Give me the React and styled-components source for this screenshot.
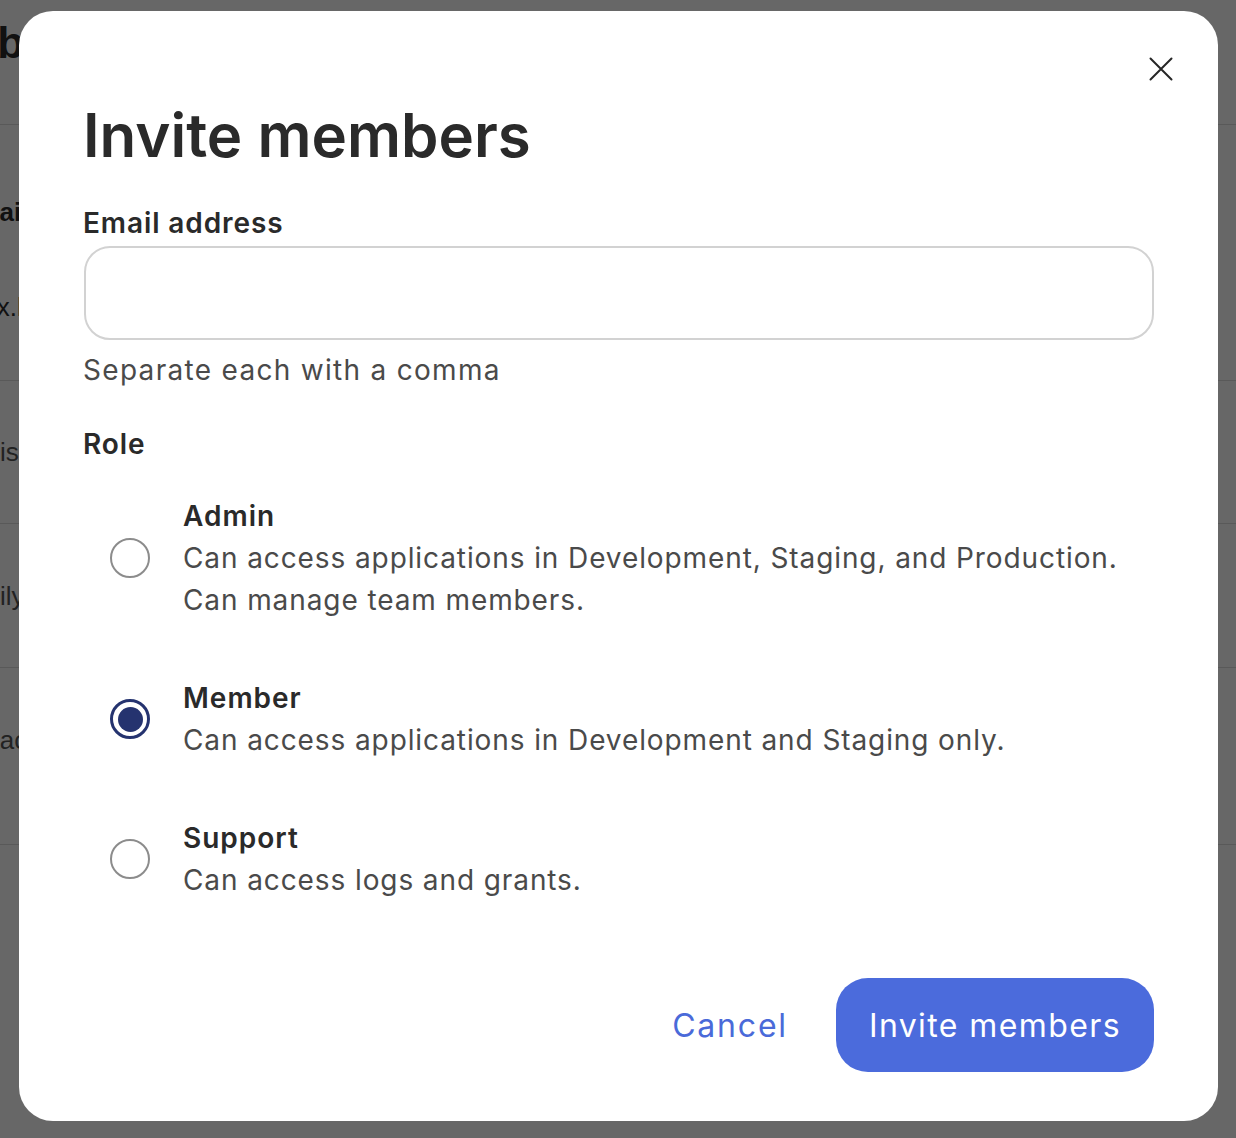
import React, { useState } from "react";
import styled, { createGlobalStyle } from "styled-components";

const roles = [
  {
    id: "admin",
    name: "Admin",
    lines: [
      "Can access applications in Development, Staging, and Production.",
      "Can manage team members.",
    ],
  },
  {
    id: "member",
    name: "Member",
    lines: ["Can access applications in Development and Staging only."],
  },
  {
    id: "support",
    name: "Support",
    lines: ["Can access logs and grants."],
  },
];

// faded page behind the dialog, only its left strip shows
const bgRows = [
  { h: 124, pad: 18, text: "Jobs", shift: -54, bold: true, size: 44, first: true },
  { h: 136, pad: 72, text: "Email", shift: -41, bold: true, size: 26 },
  { h: 120, pad: 32, text: "alex.kim", shift: -38, size: 26, dark: true, noLine: true },
  { h: 143, pad: 56, text: "Chris", shift: -42, size: 26 },
  { h: 144, pad: 57, text: "Emily", shift: -39, size: 26 },
  { h: 177, pad: 57, text: "Isaac", shift: -35, size: 26 },
  { h: 300, pad: 0, text: "", shift: 0, size: 26 },
];

function App() {
  const [role, setRole] = useState("member");

  return (
    <>
      <GlobalStyle />
      <Page>
        {bgRows.map((r, i) => (
          <BgRow key={i} $h={r.h} $pad={r.pad} $line={!r.first && !r.noLine}>
            <BgText
              $shift={r.shift}
              $bold={r.bold}
              $size={r.size}
              $dark={r.bold || r.dark}
            >
              {r.text}
            </BgText>
          </BgRow>
        ))}
      </Page>

      <Overlay>
        <Modal>
          <CloseButton aria-label="Close">
            <svg width="24" height="24" viewBox="0 0 24 24">
              <path
                d="M1.5 1.5 L22.5 22.5 M22.5 1.5 L1.5 22.5"
                stroke="#262626"
                strokeWidth="2"
                strokeLinecap="round"
              />
            </svg>
          </CloseButton>

          <Title>Invite members</Title>

          <Label>Email address</Label>
          <EmailInput type="text" />
          <Hint>Separate each with a comma</Hint>

          <Label $top={36}>Role</Label>
          <Options>
            {roles.map((r) => (
              <Option key={r.id} onClick={() => setRole(r.id)}>
                <Radio $checked={role === r.id} />
                <OptionText>
                  <OptionName>{r.name}</OptionName>
                  {r.lines.map((l) => (
                    <OptionDesc key={l}>{l}</OptionDesc>
                  ))}
                </OptionText>
              </Option>
            ))}
          </Options>

          <Footer>
            <CancelButton>Cancel</CancelButton>
            <PrimaryButton>Invite members</PrimaryButton>
          </Footer>
        </Modal>
      </Overlay>
    </>
  );
}

const GlobalStyle = createGlobalStyle`
  html, body {
    margin: 0;
    padding: 0;
    background: #ffffff;
    overflow: hidden;
  }
  * {
    box-sizing: border-box;
  }
`;

const Page = styled.div`
  width: 1236px;
  height: 1138px;
  display: flex;
  flex-direction: column;
  font-family: "Liberation Sans", Arial, sans-serif;
  -webkit-font-smoothing: antialiased;
`;

const BgRow = styled.div`
  height: ${(p) => p.$h}px;
  flex-shrink: 0;
  padding-top: ${(p) => p.$pad}px;
  border-top: ${(p) => (p.$line ? "1px solid #dddddd" : "none")};
  display: flex;
`;

const BgText = styled.span`
  margin-left: ${(p) => p.$shift}px;
  font-size: ${(p) => p.$size}px;
  line-height: ${(p) => (p.$size > 30 ? 50 : 30)}px;
  font-weight: ${(p) => (p.$bold ? 700 : 400)};
  color: ${(p) => (p.$dark ? "#2a2a2a" : "#555555")};
  white-space: nowrap;
`;

const Overlay = styled.div`
  position: fixed;
  inset: 0;
  background: rgba(0, 0, 0, 0.595);
  padding: 11px 18px 0 19px;
  display: flex;
  align-items: flex-start;
`;

const Modal = styled.div`
  position: relative;
  width: 1199px;
  height: 1110px;
  background: #ffffff;
  border-radius: 34px;
  padding: 88px 64px 49px 64px;
  display: flex;
  flex-direction: column;
  font-family: Inter, "Noto Sans", sans-serif;
  color: #2b2b2b;
`;

const CloseButton = styled.button`
  position: absolute;
  top: 45px;
  right: 44px;
  width: 26px;
  height: 26px;
  padding: 1px;
  border: none;
  background: none;
  cursor: pointer;
  display: flex;
`;

const Title = styled.h1`
  margin: 0;
  font-size: 60px;
  line-height: 72px;
  font-weight: 600;
  letter-spacing: 0px;
  color: #2a2a2a;
`;

const Label = styled.div`
  margin-top: ${(p) => p.$top || 34}px;
  font-size: 28px;
  line-height: 36px;
  font-weight: 600;
  letter-spacing: 0.9px;
  color: #2a2a2a;
`;

const EmailInput = styled.input`
  margin-top: 5px;
  margin-left: 1px;
  width: calc(100% - 1px);
  height: 94px;
  border: 2px solid #d2d2d2;
  border-radius: 26px;
  padding: 0 24px;
  font-family: inherit;
  font-size: 28px;
  outline: none;
`;

const Hint = styled.div`
  margin-top: 10px;
  font-size: 28px;
  line-height: 40px;
  color: #4a4a4a;
  letter-spacing: 1.3px;
`;

const Options = styled.div`
  margin-top: 33px;
  display: flex;
  flex-direction: column;
  gap: 56px;
`;

const Option = styled.div`
  display: flex;
  align-items: center;
  gap: 33px;
  padding-left: 27px;
  cursor: pointer;
`;

const Radio = styled.span`
  flex-shrink: 0;
  width: 40px;
  height: 40px;
  border-radius: 50%;
  border: ${(p) => (p.$checked ? "3px solid #25336f" : "2px solid #8c8c8c")};
  display: flex;
  align-items: center;
  justify-content: center;
  &::after {
    content: "";
    display: ${(p) => (p.$checked ? "block" : "none")};
    width: 25px;
    height: 25px;
    border-radius: 50%;
    background: #25336f;
  }
`;

const OptionText = styled.div`
  display: flex;
  flex-direction: column;
  font-size: 28px;
  line-height: 42px;
`;

const OptionName = styled.div`
  font-weight: 600;
  letter-spacing: 1px;
  color: #2a2a2a;
`;

const OptionDesc = styled.div`
  color: #4a4a4a;
  letter-spacing: 0.9px;
`;

const Footer = styled.div`
  margin-top: auto;
  display: flex;
  justify-content: flex-end;
  align-items: center;
  gap: 48px;
`;

const CancelButton = styled.button`
  border: none;
  background: none;
  padding: 0;
  font-family: inherit;
  font-size: 32px;
  letter-spacing: 1.8px;
  color: #4a6ad9;
  cursor: pointer;
`;

const PrimaryButton = styled.button`
  height: 94px;
  padding: 0 33px;
  border: none;
  border-radius: 32px;
  background: #4b6bdc;
  color: #ffffff;
  font-family: inherit;
  font-size: 32px;
  letter-spacing: 1.4px;
  cursor: pointer;
`;

export default App;
